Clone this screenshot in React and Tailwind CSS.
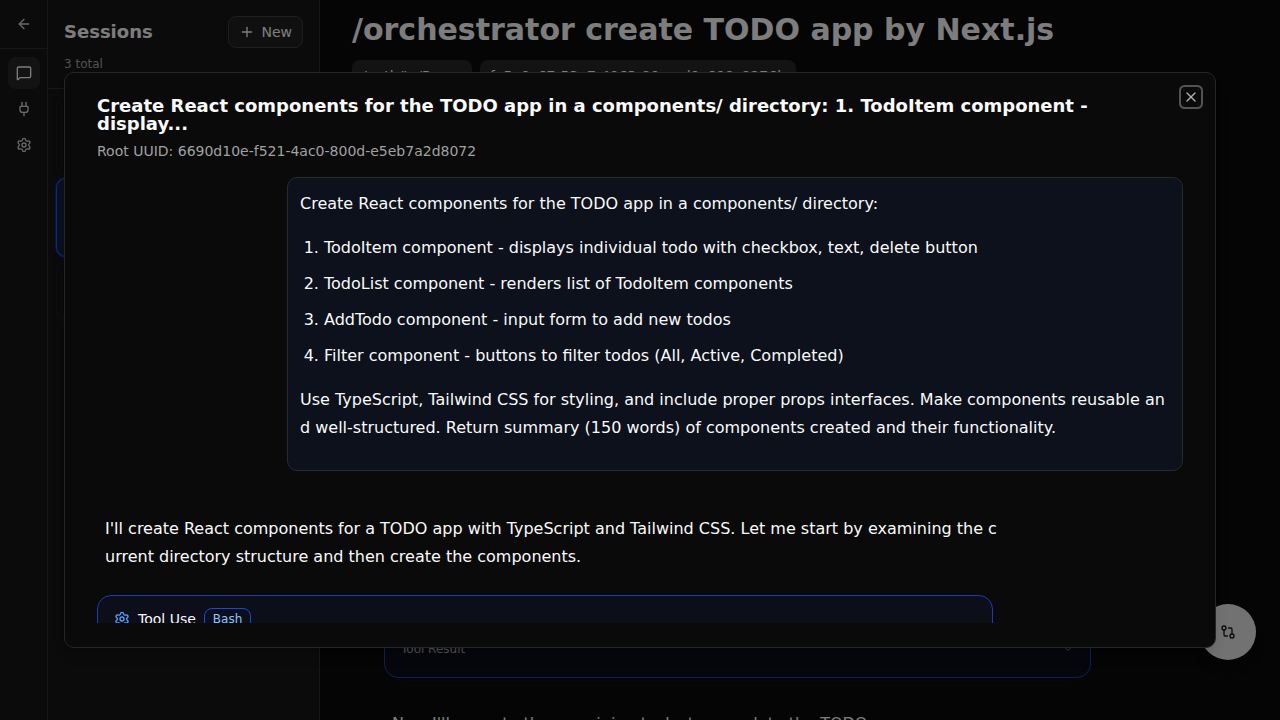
import { ArrowLeft, MessageSquare, Plug, Settings, Plus, X, GitCompare, ChevronDown } from "lucide-react";

const items = [
  "TodoItem component - displays individual todo with checkbox, text, delete button",
  "TodoList component - renders list of TodoItem components",
  "AddTodo component - input form to add new todos",
  "Filter component - buttons to filter todos (All, Active, Completed)",
];

function Rail() {
  return (
    <nav className="flex w-12 shrink-0 flex-col border-r border-white/10 bg-[#171717] text-[#d4d4d4]">
      <div className="flex h-[49px] shrink-0 items-center justify-center border-b border-white/10">
        <ArrowLeft className="size-4" />
      </div>
      <div className="flex flex-col gap-1 p-2 pr-[7px]">
        <button className="flex size-8 items-center justify-center rounded-lg bg-[#262626] text-[#fafafa]"><MessageSquare className="size-4" /></button>
        <button className="flex size-8 items-center justify-center"><Plug className="size-4" /></button>
        <button className="flex size-8 items-center justify-center"><Settings className="size-4" /></button>
      </div>
    </nav>
  );
}

function Sessions() {
  return (
    <aside className="flex w-[272px] shrink-0 flex-col border-r border-white/10 bg-[#171717] text-[#fafafa]">
      <header className="border-b border-white/10 p-4">
        <div className="flex items-center justify-between">
          <h2 className="text-lg font-semibold">Sessions</h2>
          <button className="flex h-8 items-center gap-1.5 rounded-lg border border-[#3c3c3c] bg-[#202020] px-2.5 text-sm font-medium">
            <Plus className="size-4" />New
          </button>
        </div>
        <p className="mt-2 text-xs text-[#a1a1a1]">3 total</p>
      </header>
      <div className="flex flex-col gap-[3px] p-2">
        <div className="h-[78px] rounded-[10px] border border-white/[0.03]" />
        <div className="h-[79px] rounded-[10px] border border-[#155dfc] bg-[#162040] ring-1 ring-[#0f2c7c]" />
        <div className="h-[61px] rounded-[10px] border border-white/[0.03]" />
      </div>
    </aside>
  );
}

function Main() {
  return (
    <main className="flex min-w-0 flex-1 flex-col overflow-hidden bg-[#0a0a0a] px-8 text-[#fafafa]">
      <h1 className="mt-3 shrink-0 text-3xl leading-9 font-bold whitespace-nowrap">/orchestrator create TODO app by Next.js</h1>
      <div className="mt-3 flex shrink-0 gap-2 text-sm">
        <span className="flex h-8 w-[120px] items-center rounded-lg bg-[#262626] px-2.5">/path/to/Repo</span>
        <span className="flex h-8 w-[316px] items-center rounded-lg bg-[#262626] px-2.5 whitespace-nowrap">fe5a0c67-53e7-4063-80ea-d0c608c8276b</span>
      </div>
      <div className="mt-[528px] ml-8 flex h-[58px] w-[707px] shrink-0 justify-between rounded-[14px] border border-[#193cb8] bg-[#0c0f1a] px-4 pt-5 text-xs text-[#a1a1a1]">
        <span>Tool Result</span><ChevronDown className="mt-0.5 size-3 opacity-70" />
      </div>
      <p className="mt-8 ml-10 shrink-0 text-base leading-7">Now I&apos;ll execute the remaining tasks to complete the TODO</p>
    </main>
  );
}

function Dialog() {
  return (
    <section className="relative flex h-[576px] w-[1152px] flex-col rounded-[10px] border border-[#262626] bg-[#0a0a0a] px-8 py-6 text-[#fafafa] shadow-lg">
      <button aria-label="Close" className="absolute top-4 right-4 flex size-4 items-center justify-center rounded-xs opacity-70 ring-2 ring-[#737373] ring-offset-2 ring-offset-[#0a0a0a] outline-none">
        <X className="size-4" />
      </button>
      <h2 className="pr-8 text-lg leading-[18px] font-semibold">Create React components for the TODO app in a components/ directory: 1. TodoItem component - display...</h2>
      <p className="mt-2 text-sm text-[#a1a1a1]">Root UUID: 6690d10e-f521-4ac0-800d-e5eb7a2d8072</p>
      <div className="mt-4 flex min-h-0 flex-1 flex-col overflow-hidden leading-7">
        <div className="h-[294px] w-[896px] shrink-0 self-end rounded-[10px] border border-[#262a33] bg-[#0c111c] px-3 pt-3">
          <p>Create React components for the TODO app in a components/ directory:</p>
          <ol className="mt-4 flex list-decimal flex-col gap-2 pl-6">
            {items.map((t) => <li key={t}>{t}</li>)}
          </ol>
          <p className="mt-4 break-all">Use TypeScript, Tailwind CSS for styling, and include proper props interfaces. Make components reusable and well-structured. Return summary (150 words) of components created and their functionality.</p>
        </div>
        <p className="mt-11 ml-2 w-[896px] shrink-0 break-all">I&apos;ll create React components for a TODO app with TypeScript and Tailwind CSS. Let me start by examining the current directory structure and then create the components.</p>
        <div className="mt-6 h-24 w-[896px] shrink-0 rounded-[14px] border border-[#193cb8] bg-[#0c0f1a] px-4 pt-3">
          <div className="flex items-center gap-2 text-sm leading-5">
            <Settings className="size-4 text-[#51a2ff]" />
            <span>Tool Use</span>
            <span className="rounded-lg border border-[#1447e6] px-2 py-0.5 text-xs leading-4 text-[#8ec5ff]">Bash</span>
          </div>
        </div>
      </div>
    </section>
  );
}

export default function App() {
  return (
    <div className="relative flex h-screen w-screen overflow-hidden bg-[#0a0a0a] font-['DejaVu_Sans',sans-serif]">
      <Rail />
      <Sessions />
      <Main />
      <button aria-label="Compare" className="absolute top-[604px] left-[1200px] flex size-14 items-center justify-center rounded-full bg-[#e5e5e5] text-[#171717] shadow-lg">
        <GitCompare className="size-4" />
      </button>
      <div className="absolute inset-0 flex items-center justify-center bg-black/50">
        <Dialog />
      </div>
    </div>
  );
}
